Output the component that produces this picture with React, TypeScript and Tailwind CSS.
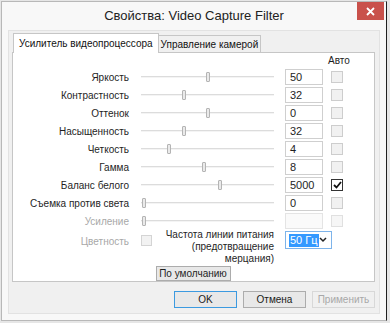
import React from 'react';

interface Row {
  label: string;
  thumb: number;
  value: string;
  checked?: boolean;
  disabled?: boolean;
}

const rows: Row[] = [
  { label: 'Яркость', thumb: 65, value: '50' },
  { label: 'Контрастность', thumb: 41, value: '32' },
  { label: 'Оттенок', thumb: 65, value: '0' },
  { label: 'Насыщенность', thumb: 41, value: '32' },
  { label: 'Четкость', thumb: 26, value: '4' },
  { label: 'Гамма', thumb: 61, value: '8' },
  { label: 'Баланс белого', thumb: 77, value: '5000', checked: true },
  { label: 'Съемка против света', thumb: 1, value: '0' },
  { label: 'Усиление', thumb: 1, value: '', disabled: true },
];

function Slider({ thumb }: { thumb: number }) {
  return (
    <div className="relative w-[133px] h-[18px] flex items-center">
      <div className="w-full h-[2px] bg-[#dcdcdc] border-b border-[#f4f4f4]" />
      <div
        className="absolute top-[4px] w-[4px] h-[10px] rounded-[1px] bg-[#eaeaea] border border-[#b4b4b4]"
        style={{ left: thumb }}
      />
    </div>
  );
}

function Check({ checked, light }: { checked?: boolean; light?: boolean }) {
  if (checked) {
    return (
      <div className="w-[12px] h-[12px] border border-[#333] bg-white flex items-center justify-center">
        <svg width="9" height="8" viewBox="0 0 9 8">
          <path d="M1 4 L3.5 6.5 L8 1" stroke="#111" strokeWidth="1.8" fill="none" />
        </svg>
      </div>
    );
  }
  return (
    <div
      className={`w-[12px] h-[12px] border ${light ? 'border-[#e0e0e0] bg-[#f6f6f6]' : 'border-[#cdcdcd] bg-[#f1f1f1]'}`}
    />
  );
}

function Btn({ children, primary, disabled }: { children: React.ReactNode; primary?: boolean; disabled?: boolean }) {
  return (
    <div
      className={`w-[63px] h-[17px] flex items-center justify-center border ${
        primary
          ? 'border-[#3c9ae0] bg-[#e8e8e8] text-[#1a1a1a]'
          : disabled
          ? 'border-[#d8d8d8] bg-[#f0f0f0] text-[#a8a8a8]'
          : 'border-[#acacac] bg-[#e8e8e8] text-[#1a1a1a]'
      }`}
    >
      {children}
    </div>
  );
}

export default function App() {
  return (
    <div
      className="w-[390px] h-[323px] bg-[#e6e6e6] overflow-hidden pl-[1px] pt-[1px] text-[10px]"
      style={{ fontFamily: '"Liberation Sans", Arial, sans-serif' }}
    >
      <div className="w-[386px] h-[320px] border border-[#b8b8b8] border-r-[#202020] bg-[#f8f8f8] flex flex-col">
        <div className="relative h-[28px] flex items-center justify-center text-[13px] text-[#222]">
          Свойства: Video Capture Filter
          <div className="absolute right-[2px] top-0 w-[27px] h-[18px] bg-[#c9514b] flex items-center justify-center">
            <svg width="9" height="9" viewBox="0 0 9 9">
              <path d="M1 1 L8 8 M8 1 L1 8" stroke="#fff" strokeWidth="1.8" />
            </svg>
          </div>
        </div>

        <div className="mx-[6px] mb-[6px] flex-1 border border-[#e2e2e2] bg-[#f0f0f0] px-[3px]">
          <div className="flex items-end h-[21px] pl-[1px]">
            <div className="h-[20px] px-[5px] flex items-center bg-white border border-b-0 border-[#c6c6c6] text-[#111] z-10 -mb-px">
              Усилитель видеопроцессора
            </div>
            <div className="h-[17px] px-[2px] flex items-center bg-[#f0f0f0] border border-l-0 border-b-0 border-[#c6c6c6] text-[#111]">
              Управление камерой
            </div>
          </div>

          <div className="w-[363px] h-[230px] bg-white border border-[#c6c6c6] text-[#1e1e1e]">
            <div className="h-[15px] pl-[315px] pt-[2px] leading-[11px]">Авто</div>
            <div className="flex flex-col">
              {rows.map((r) => (
                <div key={r.label} className="flex items-center h-[18px]">
                  <div className={`w-[116px] text-right ${r.disabled ? 'text-[#a8a8a8]' : ''}`}>{r.label}</div>
                  <div className="ml-[12px]">
                    <Slider thumb={r.thumb} />
                  </div>
                  <div
                    className={`ml-[11px] w-[38px] h-[16px] border pl-[4px] flex items-center text-[11px] ${
                      r.disabled ? 'border-[#e4e4e4] bg-[#fafafa]' : 'border-[#cfcfcf] bg-white'
                    }`}
                  >
                    {r.value}
                  </div>
                  <div className="ml-[8px]">
                    <Check checked={r.checked} light={r.disabled} />
                  </div>
                </div>
              ))}
            </div>

            <div className="flex h-[37px] -mt-[1px]">
              <div className="w-[116px] text-right pt-[5px] text-[#a8a8a8]">Цветность</div>
              <div className="ml-[12px] mt-[6px] w-[11px] h-[11px] border border-[#d4d4d4] bg-[#f2f2f2]" />
              <div className="ml-[2px] w-[120px] text-right leading-[12px]">
                Частота линии питания
                <br />
                (предотвращение
                <br />
                мерцания)
              </div>
              <div className="ml-[11px] mt-[2px] w-[47px] h-[18px] border border-[#7eb4ea] bg-white flex items-center pl-[3px]">
                <span className="bg-[#3399ff] text-white px-[1px] leading-[13px] text-[11px]">50 Гц</span>
                <svg className="ml-auto mr-[4px]" width="8" height="6" viewBox="0 0 8 6">
                  <path d="M1 1 L4 4 L7 1" stroke="#222" strokeWidth="1.5" fill="none" />
                </svg>
              </div>
            </div>

            <div className="flex justify-center pr-[1px]">
              <div className="w-[75px] h-[15px] border border-[#acacac] bg-[#e8e8e8] flex items-center justify-center">
                По умолчанию
              </div>
            </div>
          </div>

          <div className="flex justify-end gap-[6px] mt-[9px] pr-[1px]">
            <Btn primary>OK</Btn>
            <Btn>Отмена</Btn>
            <Btn disabled>Применить</Btn>
          </div>
        </div>
      </div>
    </div>
  );
}
